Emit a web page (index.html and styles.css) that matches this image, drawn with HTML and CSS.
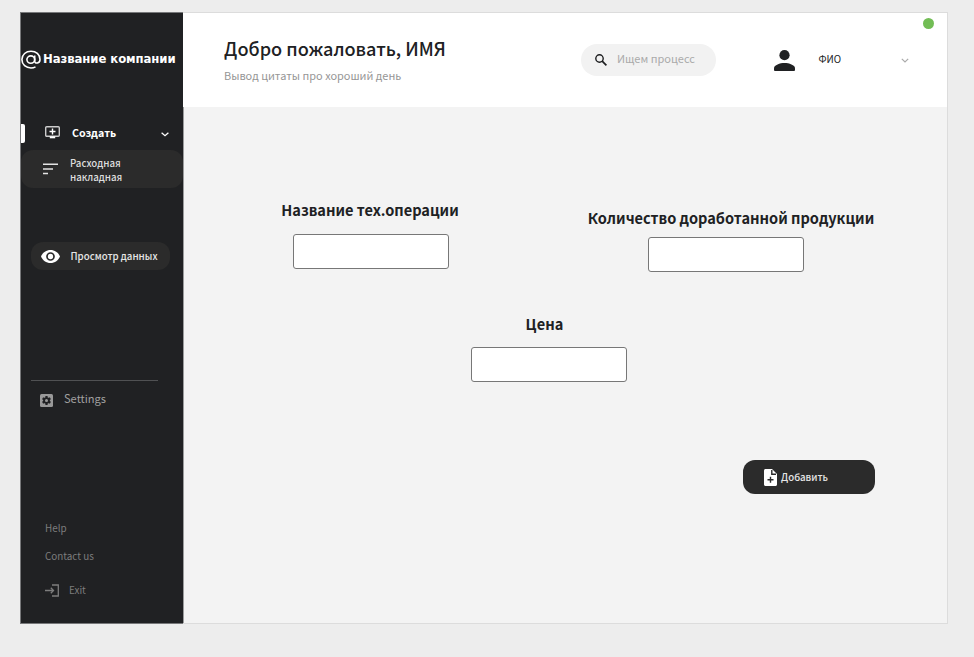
FILE: index.html
```
<!DOCTYPE html>
<html lang="ru">
<head>
<meta charset="utf-8">
<title>Расходная накладная</title>
<link rel="stylesheet" href="styles.css">
</head>
<body>
<div class="window">
  <aside class="sidebar">
    <div class="brand">
      <svg class="brand-icon" width="20" height="20" viewBox="0 0 20 20" fill="none" stroke="#fff" stroke-width="1.6"><ellipse cx="9.8" cy="9.6" rx="3.9" ry="3.7"/><path d="M13.700 5.500v5.800c0 2.800 5.300 2.300 5.300-1.900C19 4.500 15 1.200 10 1.200S.9 4.500.9 9.600s4.100 8.400 9.100 8.400c1.700 0 3.200-.4 4.500-1.100"/></svg>
      <span class="brand-name">Название компании</span>
    </div>
    <nav class="menu">
      <a class="menu-item create">
        <svg class="create-icon" width="15" height="13" viewBox="0 0 15 13" fill="none" stroke="#fff"><rect x=".7" y=".7" width="13.600" height="9.600" rx="1" stroke-width="1.400" stroke="#ccc"/><path d="M7.500 2.500v6M4.500 5.500h6" stroke-width="1.400"/><path d="M4.800 11.300h5.400" stroke-width="2"/></svg>
        <span class="create-label">Создать</span>
        <svg class="chevron" width="8" height="5" viewBox="0 0 8 5" fill="none" stroke="#fff" stroke-width="1.300"><path d="M.6.700 4 3.700 7.400.700"/></svg>
      </a>
      <a class="menu-item invoice">
        <svg width="15" height="12" viewBox="0 0 15 12" stroke="#e4e4e4" stroke-width="1.500"><path d="M0 1.200h15M0 6h10M0 10.500h5"/></svg>
        <span class="invoice-label">Расходная<br>накладная</span>
      </a>
      <a class="menu-item view">
        <svg width="19" height="13" viewBox="0 0 19 13"><path d="M9.500 0C5.200 0 1.500 2.700 0 6.500 1.500 10.300 5.200 13 9.500 13s8-2.700 9.500-6.500C17.500 2.700 13.800 0 9.500 0z" fill="#fff"/><circle cx="9.500" cy="6.500" r="3.500" fill="#fff" stroke="#2b2b2b" stroke-width="1.700"/></svg>
        <span class="view-label">Просмотр данных</span>
      </a>
    </nav>
    <hr class="divider">
    <a class="settings">
      <svg width="13" height="13" viewBox="0 0 13 13"><rect width="13" height="13" rx="1.500" fill="#999"/><path d="M6.500 2v9M2.600 4.250l7.800 4.500M2.600 8.750l7.800-4.500" stroke="#202123" stroke-width="2.200"/><circle cx="6.500" cy="6.500" r="3.300" fill="#202123"/><circle cx="6.500" cy="6.500" r="1.500" fill="#999"/></svg>
      <span class="settings-label">Settings</span>
    </a>
    <div class="footer-links">
      <a class="help">Help</a>
      <a class="contact">Contact us</a>
      <a class="exit"><svg width="15" height="13" viewBox="0 0 15 13" fill="none" stroke="#7d7d7d" stroke-width="1.300"><path d="M7 1h6.300v11H7M0 6.500h8.500M5.800 3.800l2.700 2.700-2.700 2.700"/></svg><span class="exit-label">Exit</span></a>
    </div>
  </aside>
  <div class="content">
    <header class="topbar">
      <div class="greeting">
        <h1 class="title">Добро пожаловать, ИМЯ</h1>
        <p class="quote">Вывод цитаты про хороший день</p>
      </div>
      <div class="search">
        <svg width="12" height="12" viewBox="0 0 12 12" fill="none" stroke="#1d1e20" stroke-width="1.400"><circle cx="4.500" cy="4.500" r="3.700"/><path d="m7.200 7.200 4.200 4.200" stroke-width="1.700"/></svg>
        <span class="search-label">Ищем процесс</span>
      </div>
      <div class="user">
        <svg width="21" height="21" viewBox="0 0 21 21" fill="#202123"><circle cx="10.500" cy="5.200" r="5.100"/><path d="M0 20v-1.700C0 15 6 13 10.500 13S21 15 21 18.300V20q0 1-1 1H1q-1 0-1-1z"/></svg>
        <span class="user-name">ФИО</span>
        <svg class="user-chevron" width="8" height="5" viewBox="0 0 8 5" fill="none" stroke="#aaa" stroke-width="1.200"><path d="M.8.800 4 4 7.200.800"/></svg>
      </div>
      <i class="status"></i>
    </header>
    <main class="form">
      <div class="fields">
        <label class="field operation"><span class="label operation-label">Название тех.операции</span><input class="input" type="text"></label>
        <label class="field amount"><span class="label amount-label">Количество доработанной продукции</span><input class="input" type="text"></label>
      </div>
      <label class="field price"><span class="label price-label">Цена</span><input class="input" type="text"></label>
      <button class="add" type="button">
        <svg width="13" height="17" viewBox="0 0 13 17"><path d="M1.500 0H8l5 5v10.500c0 .8-.7 1.500-1.500 1.500h-10C.7 17 0 16.300 0 15.500v-14C0 .7.700 0 1.500 0z" fill="#fff"/><path d="M7.800 1v4.300H12M6.500 7.800v6M3.500 10.800h6" fill="none" stroke="#2b2b2b" stroke-width="1.400"/></svg>
        <span class="add-label">Добавить</span>
      </button>
    </main>
  </div>
</div>
</body>
</html>
```

FILE: styles.css
```
* { box-sizing: border-box; }
body {
  margin: 0;
  padding: 12px 26px 33px 20px;
  height: 657px;
  background: #ededed;
  font-family: "Noto Sans CJK JP", "Noto Sans", sans-serif;
  color: #202123;
  overflow: hidden;
}
svg { display: block; flex: none; }
span, a { white-space: nowrap; }
.window { display: flex; height: 612px; }
.sidebar {
  width: 163px;
  flex: none;
  display: flex;
  flex-direction: column;
  background: #202123;
  border: 1px solid #77787a;
  border-right: 0;
}
.brand { display: flex; align-items: center; height: 94px; gap: 2px; }
.brand-name {
  color: #fff;
  font: 700 11.7px/18px "DejaVu Sans", sans-serif;
  letter-spacing: -0.08px;
  margin-top: -2px;
}
.menu { display: flex; flex-direction: column; }
.menu-item { display: flex; align-items: center; }
.create { height: 19px; margin-top: 17px; margin-bottom: 1px; }
.create::before { content: ""; width: 4px; height: 19px; background: #fff; border-radius: 0 2px 2px 0; }
.create-icon { margin-left: 20px; margin-top: -2px; }
.create-label { margin-left: 12px; width: 45px; font-size: 10.7px; font-weight: 700; color: #fff; line-height: 18px; margin-top: -1px; }
.chevron { margin-left: 44px; margin-top: 2px; }
.invoice { height: 38px; margin-top: 6px; padding-left: 22px; gap: 12px; background: #2b2b2b; border-radius: 12px; }
.invoice-label { font-size: 9.7px; line-height: 14px; font-weight: 500; color: #ddd; margin-top: 1px; }
.view { width: 139px; height: 28px; margin: 54px 0 0 10px; padding-left: 10px; gap: 12px; background: #2b2b2b; border-radius: 12px; }
.view svg { margin-left: -.5px; }
.view-label { font-size: 9.7px; font-weight: 500; color: #e5e5e5; margin-left: -1px; }
.divider { width: 127px; height: 1px; border: 0; background: #505153; margin: 110px 0 0 10px; }
.settings { display: flex; align-items: center; gap: 11px; height: 20px; margin: 9px 0 0 19px; }
.settings-label { font-size: 11.1px; line-height: 18px; color: #a0a0a0; margin-top: -4px; }
.footer-links { display: flex; flex-direction: column; margin: 109px 0 0 24px; color: #7d7d7d; font-size: 9.9px; line-height: 18px; }
.contact { margin-top: 10px; }
.exit { display: flex; align-items: center; gap: 9px; margin-top: 16px; }
.content {
  flex: 1;
  display: flex;
  flex-direction: column;
  background: #f3f3f3;
  border: 1px solid #dcdcdc;
  border-left: 0;
}
.topbar { position: relative; display: flex; height: 94px; background: #fff; }
.greeting { width: 357px; margin-left: 41px; padding-top: 21px; }
.title { margin: 0; font-size: 18.1px; line-height: 28px; font-weight: 500; white-space: nowrap; }
.quote { margin: 4px 0 0; font-size: 10.95px; line-height: 18px; color: #969696; }
.search { display: flex; align-items: center; width: 135px; height: 32px; margin: 31px 0 0 0; padding-left: 14px; gap: 10px; background: #f2f2f2; border-radius: 16px; }
.search-label { font-size: 11px; color: #aaa; margin-top: -4px; }
.user { display: flex; align-items: center; height: 34px; margin: 31px 0 0 57.5px; }
.user > svg:first-child { margin-top: -1px; }
.user-name { width: 82px; margin-left: 24px; font-size: 9.9px; margin-top: -5px; }
.user-chevron { margin-top: -1px; }
.status { position: absolute; right: 13px; top: 5px; width: 11px; height: 11px; border-radius: 50%; background: #72bd55; }
.form { display: flex; flex-direction: column; flex: 1; border-left: 1px solid #9a9b9c; }
.fields { display: flex; }
.field { display: flex; flex-direction: column; align-items: center; }
.label { font-size: 14.57px; line-height: 22px; font-weight: 700; }
.input { width: 156px; height: 35px; border: 1px solid #777; border-radius: 3px; background: #fff; padding: 0 8px; }
.operation { width: 178px; margin: 92px 0 0 97px; gap: 13px; }
.operation .input { margin-left: 2px; }
.amount { width: 286px; margin: 100px 0 0 129px; gap: 8px; }
.amount .input { margin-left: -10px; }
.price { width: 156px; margin: 41px 0 0 287px; gap: 12px; }
.price-label { margin-left: -9px; }
.add { display: flex; align-items: center; gap: 4px; width: 132px; height: 34px; margin: 78px 0 0 559px; padding: 0 0 0 21px; border: 0; border-radius: 12px; background: #2b2b2b; color: #e5e5e5; font: 500 9.7px/18px "Noto Sans CJK JP", sans-serif; }
```
